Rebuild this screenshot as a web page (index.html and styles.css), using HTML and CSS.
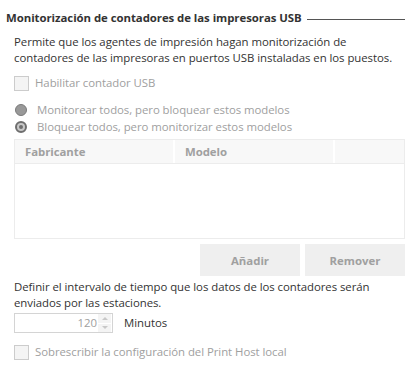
FILE: index.html
```html
<!DOCTYPE html>
<html lang="es">
<head>
    <meta charset="UTF-8">
    <title>Monitorización de contadores USB</title>
    <link rel="stylesheet" href="styles.css">
</head>
<body>
    <div class="group">
        <div class="group-header">
            <h2 class="group-title">Monitorización de contadores de las impresoras USB</h2>
            <span class="group-rule"></span>
        </div>

        <div class="group-body">
            <p class="description">Permite que los agentes de impresión hagan monitorización de contadores de las impresoras en puertos USB instaladas en los puestos.</p>

            <label class="check-row first-check">
                <span class="checkbox"></span>
                <span class="check-label">Habilitar contador USB</span>
            </label>

            <div class="radio-list">
                <label class="radio-row">
                    <span class="radio"></span>
                    <span class="check-label">Monitorear todos, pero bloquear estos modelos</span>
                </label>
                <label class="radio-row">
                    <span class="radio checked"></span>
                    <span class="check-label">Bloquear todos, pero monitorizar estos modelos</span>
                </label>
            </div>

            <div class="grid">
                <div class="grid-head">
                    <div class="grid-col col-maker">Fabricante</div>
                    <div class="grid-col col-model">Modelo</div>
                    <div class="grid-col col-rest"></div>
                </div>
                <div class="grid-rows"></div>
            </div>

            <div class="button-row">
                <button type="button" class="btn" disabled>Añadir</button>
                <button type="button" class="btn" disabled>Remover</button>
            </div>

            <p class="description interval-text">Definir el intervalo de tiempo que los datos de los contadores serán enviados por las estaciones.</p>

            <div class="interval-row">
                <div class="spinner">
                    <span class="spinner-value">120</span>
                    <span class="spinner-arrows">
                        <span class="arrow up"></span>
                        <span class="arrow down"></span>
                    </span>
                </div>
                <span class="unit">Minutos</span>
            </div>

            <label class="check-row last-check">
                <span class="checkbox"></span>
                <span class="check-label">Sobrescribir la configuración del Print Host local</span>
            </label>
        </div>
    </div>
</body>
</html>
```

FILE: styles.css
```css
* {
    margin: 0;
    padding: 0;
    box-sizing: border-box;
}

body {
    font-family: 'Open Sans', 'Noto Sans', sans-serif;
    font-size: 11.4px;
    letter-spacing: -0.05px;
    line-height: 16px;
    color: #333;
    background: #fff;
}

.group {
    padding: 10px 7px 0 6px;
}

.group-header {
    display: flex;
    align-items: center;
    gap: 5px;
    height: 16px;
}

.group-title {
    font-size: 11.4px;
    font-weight: 700;
    color: #333;
    white-space: nowrap;
}

.group-rule {
    flex: 1;
    border-top: 1px solid #555;
    margin-top: 3px;
}

.group-body {
    padding-left: 8px;
}

.description {
    margin-top: 8px;
}

.check-row {
    display: flex;
    align-items: center;
    gap: 6px;
    color: #a0a0a0;
}

.first-check {
    margin-top: 9px;
}

.checkbox {
    width: 15px;
    height: 15px;
    border: 1px solid #ccc;
    background: #f4f4f4;
}

.radio-list {
    margin-top: 10px;
}

.radio-row {
    display: flex;
    align-items: center;
    gap: 10px;
    height: 17px;
    color: #a0a0a0;
    padding-left: 1px;
}

.radio {
    width: 12px;
    height: 12px;
    border-radius: 50%;
    background: #999;
    border: 1px solid #7a7a7a;
    position: relative;
}

.radio.checked {
    background: #c8c8c8;
    border: 2px solid #6e6e6e;
}

.radio.checked::after {
    content: '';
    position: absolute;
    left: 2px;
    top: 2px;
    width: 4px;
    height: 4px;
    border-radius: 50%;
    background: #6e6e6e;
}

.grid {
    margin-top: 4px;
    border: 1px solid #ececec;
    height: 100px;
}

.grid-head {
    display: flex;
    height: 24px;
    background: #f8f8f8;
    border-bottom: 1px solid #ececec;
}

.grid-col {
    font-weight: 700;
    color: #a0a0a0;
    padding: 4px 10px;
    border-right: 2px solid #fff;
}

.col-maker {
    width: 160px;
}

.col-model {
    width: 160px;
}

.col-rest {
    flex: 1;
    border-right: none;
}

.button-row {
    display: flex;
    justify-content: flex-end;
    gap: 5px;
    margin-top: 5px;
}

.btn {
    width: 100px;
    height: 32px;
    border: none;
    background: #efefef;
    color: #a0a0a0;
    font-family: inherit;
    font-size: 11.4px;
    font-weight: 700;
}

.interval-text {
    margin-top: 3px;
}

.interval-row {
    display: flex;
    align-items: center;
    gap: 11px;
    margin-top: 2px;
}

.spinner {
    display: flex;
    align-items: center;
    justify-content: flex-end;
    width: 99px;
    height: 20px;
    border: 1px solid #d4d4d4;
    color: #a0a0a0;
}

.spinner-value {
    padding-right: 1px;
}

.spinner-arrows {
    display: flex;
    flex-direction: column;
    width: 13px;
    height: 18px;
    margin-right: 1px;
}

.arrow {
    flex: 1;
    display: flex;
    align-items: center;
    justify-content: center;
    background: #f4f4f4;
}

.arrow.up {
    border-bottom: 1px solid #fff;
}

.arrow::before {
    content: '';
    border-left: 3px solid transparent;
    border-right: 3px solid transparent;
}

.arrow.up::before {
    border-bottom: 3px solid #c8c8c8;
}

.arrow.down::before {
    border-top: 3px solid #c8c8c8;
}

.unit {
    color: #333;
}

.last-check {
    margin-top: 11px;
}
```
